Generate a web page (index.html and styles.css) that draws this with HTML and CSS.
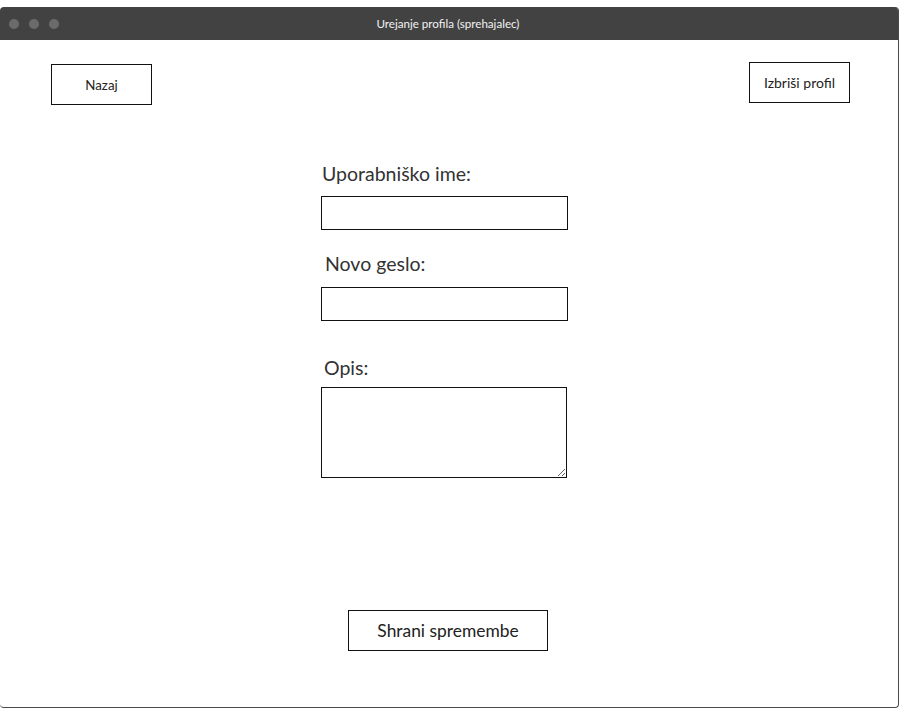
FILE: index.html
```html
<!DOCTYPE html>
<html lang="sl">
<head>
<meta charset="utf-8">
<title>Urejanje profila (sprehajalec)</title>
<link rel="stylesheet" href="styles.css">
</head>
<body>
<div class="window">
  <div class="titlebar">
    <div class="lights"><span class="dot"></span><span class="dot"></span><span class="dot"></span></div>
    <div class="title">Urejanje profila (sprehajalec)</div>
  </div>
  <div class="content">
    <div class="toprow">
      <button class="btn btn-back">Nazaj</button>
      <button class="btn btn-delete">Izbriši profil</button>
    </div>
    <div class="form">
      <label class="lbl lbl-user">Uporabniško ime:</label>
      <input class="field" type="text">
      <label class="lbl lbl-pass">Novo geslo:</label>
      <input class="field" type="password">
      <label class="lbl lbl-desc">Opis:</label>
      <textarea class="area"></textarea>
    </div>
    <div class="saverow">
      <button class="btn btn-save">Shrani spremembe</button>
    </div>
  </div>
</div>
</body>
</html>
```

FILE: styles.css
```css
html, body {
  margin: 0;
  padding: 0;
  background: #ffffff;
}
body {
  font-family: Lato, "Open Sans", sans-serif;
}
.window {
  margin-top: 7px;
  width: 898px;
  height: 700px;
  border-right: 1px solid #4a4a4a;
  border-bottom: 1px solid #4a4a4a;
  border-radius: 4px 4px 4px 4px;
  overflow: hidden;
  box-sizing: content-box;
  display: flex;
  flex-direction: column;
}
.titlebar {
  height: 33px;
  background: #424242;
  display: flex;
  align-items: center;
  position: relative;
  flex: none;
}
.lights {
  display: flex;
  gap: 10px;
  padding-left: 9px;
}
.dot {
  width: 10px;
  height: 10px;
  border-radius: 50%;
  background: #6b6b6b;
}
.title {
  position: absolute;
  left: 0;
  right: 0;
  top: 0;
  line-height: 33px;
  text-align: center;
  color: #f2f2f2;
  font-size: 11.6px;
  padding-right: 2px;
}
.content {
  flex: 1;
  display: flex;
  flex-direction: column;
}
.toprow {
  display: flex;
  justify-content: space-between;
  align-items: flex-start;
  padding: 22px 48px 0 51px;
}
.btn {
  background: #ffffff;
  border: 1px solid #111111;
  border-radius: 0;
  font-family: Lato, "Open Sans", sans-serif;
  color: #222222;
  padding: 0;
  margin: 0;
  box-sizing: border-box;
}
.btn-back {
  width: 101px;
  height: 41px;
  font-size: 13.3px;
  margin-top: 2px;
}
.btn-delete {
  width: 101px;
  height: 41px;
  font-size: 14px;
}
.form {
  display: flex;
  flex-direction: column;
  align-items: flex-start;
  margin-left: 321px;
}
.lbl {
  display: block;
  font-size: 19.5px;
  line-height: 23px;
  color: #333333;
}
.lbl-user {
  margin-top: 57px;
  margin-left: 1px;
}
.lbl-pass {
  margin-top: 22px;
  margin-left: 4px;
}
.lbl-desc {
  margin-top: 35px;
  margin-left: 3px;
}
.field {
  margin: 11px 0 0 0;
  width: 247px;
  height: 34px;
  box-sizing: border-box;
  border: 1px solid #111111;
  border-radius: 0;
  padding: 0 4px;
  outline: none;
}
.lbl-pass + .field {
  margin-top: 12px;
}
.area {
  margin: 8px 0 0 0;
  width: 246px;
  height: 91px;
  box-sizing: border-box;
  border: 1px solid #111111;
  border-radius: 0;
  padding: 2px;
  resize: both;
  font-family: Lato, sans-serif;
}
.saverow {
  display: flex;
  padding-left: 348px;
  margin-top: 132px;
}
.btn-save {
  width: 200px;
  height: 41px;
  font-size: 17.4px;
}
```
